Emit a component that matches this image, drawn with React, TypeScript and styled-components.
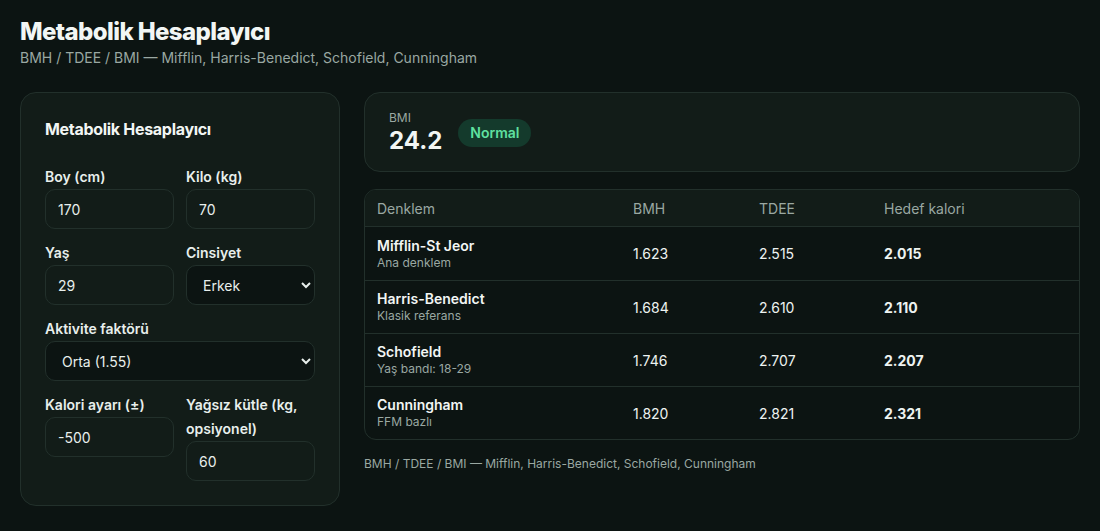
import styled, { createGlobalStyle } from "styled-components";

const GlobalStyle = createGlobalStyle`
  body {
    margin: 0;
    background: #0c1412;
    font-family: Inter, "Noto Sans", sans-serif;
    color: #e8efec;
  }
`;

const rows = [
  { name: "Mifflin-St Jeor", note: "Ana denklem", bmh: "1.623", tdee: "2.515", goal: "2.015" },
  { name: "Harris-Benedict", note: "Klasik referans", bmh: "1.684", tdee: "2.610", goal: "2.110" },
  { name: "Schofield", note: "Yaş bandı: 18-29", bmh: "1.746", tdee: "2.707", goal: "2.207" },
  { name: "Cunningham", note: "FFM bazlı", bmh: "1.820", tdee: "2.821", goal: "2.321" },
];

export default function App() {
  return (
    <>
      <GlobalStyle />
      <Page>
        <Header>
          <Title>Metabolik Hesaplayıcı</Title>
          <Subtitle>BMH / TDEE / BMI — Mifflin, Harris-Benedict, Schofield, Cunningham</Subtitle>
        </Header>

        <Layout>
          <FormCard>
            <CardTitle>Metabolik Hesaplayıcı</CardTitle>
            <FieldGrid>
              <Field>
                <Label>Boy (cm)</Label>
                <Input defaultValue="170" />
              </Field>
              <Field>
                <Label>Kilo (kg)</Label>
                <Input defaultValue="70" />
              </Field>
              <Field>
                <Label>Yaş</Label>
                <Input defaultValue="29" />
              </Field>
              <Field>
                <Label>Cinsiyet</Label>
                <Select defaultValue="m">
                  <option value="m">Erkek</option>
                  <option value="f">Kadın</option>
                </Select>
              </Field>
              <Field $wide>
                <Label>Aktivite faktörü</Label>
                <Select defaultValue="1.55">
                  <option value="1.2">Düşük (1.2)</option>
                  <option value="1.55">Orta (1.55)</option>
                  <option value="1.9">Yüksek (1.9)</option>
                </Select>
              </Field>
              <Field>
                <Label>Kalori ayarı (±)</Label>
                <Input defaultValue="-500" />
              </Field>
              <Field>
                <Label>Yağsız kütle (kg, opsiyonel)</Label>
                <Input defaultValue="60" />
              </Field>
            </FieldGrid>
          </FormCard>

          <Results>
            <BmiCard>
              <BmiBlock>
                <BmiLabel>BMI</BmiLabel>
                <BmiValue>24.2</BmiValue>
              </BmiBlock>
              <Badge>Normal</Badge>
            </BmiCard>

            <TableCard>
              <HeadRow>
                <HeadCell>Denklem</HeadCell>
                <HeadCell>BMH</HeadCell>
                <HeadCell>TDEE</HeadCell>
                <HeadCell>Hedef kalori</HeadCell>
              </HeadRow>
              {rows.map((r) => (
                <BodyRow key={r.name}>
                  <Cell>
                    <EqName>{r.name}</EqName>
                    <EqNote>{r.note}</EqNote>
                  </Cell>
                  <Cell>{r.bmh}</Cell>
                  <Cell>{r.tdee}</Cell>
                  <Cell $strong>{r.goal}</Cell>
                </BodyRow>
              ))}
            </TableCard>

            <Footnote>BMH / TDEE / BMI — Mifflin, Harris-Benedict, Schofield, Cunningham</Footnote>
          </Results>
        </Layout>
      </Page>
    </>
  );
}

const Page = styled.div`
  padding: 16px 20px 20px;
`;

const Header = styled.header`
  display: flex;
  flex-direction: column;
  margin-bottom: 24px;
`;

const Title = styled.h1`
  margin: 0;
  font-size: 24px;
  line-height: 32px;
  font-weight: 800;
  letter-spacing: -0.6px;
  color: #f2f6f4;
`;

const Subtitle = styled.p`
  margin: 0;
  font-size: 14px;
  line-height: 20px;
  color: #9aa8a2;
`;

const Layout = styled.div`
  display: grid;
  grid-template-columns: 320px 1fr;
  gap: 24px;
  align-items: start;
`;

const FormCard = styled.section`
  background: #121c18;
  border: 1px solid #22302b;
  border-radius: 16px;
  padding: 24px;
`;

const CardTitle = styled.h2`
  margin: 0 0 24px;
  font-size: 16px;
  line-height: 24px;
  font-weight: 700;
  letter-spacing: -0.3px;
  color: #f2f6f4;
`;

const FieldGrid = styled.div`
  display: grid;
  grid-template-columns: 1fr 1fr;
  column-gap: 12px;
  row-gap: 12px;
  align-items: start;
`;

const Field = styled.label<{ $wide?: boolean }>`
  display: flex;
  flex-direction: column;
  grid-column: ${(p) => (p.$wide ? "1 / -1" : "auto")};
`;

const Label = styled.span`
  font-size: 14px;
  line-height: 24px;
  font-weight: 600;
  color: #e8efec;
`;

const Input = styled.input`
  box-sizing: border-box;
  height: 40px;
  width: 100%;
  padding: 0 12px;
  background: #121c18;
  border: 1px solid #22302b;
  border-radius: 10px;
  color: #e8efec;
  font-family: Inter, "Noto Sans", sans-serif;
  font-size: 14px;
  outline: none;
`;

const Select = styled.select`
  box-sizing: border-box;
  height: 40px;
  width: 100%;
  padding: 0 8px 0 12px;
  background: #0c1412;
  border: 1px solid #22302b;
  border-radius: 10px;
  color: #e8efec;
  font-family: Inter, "Noto Sans", sans-serif;
  font-size: 14px;
  color-scheme: dark;
  outline: none;
`;

const Results = styled.div`
  display: flex;
  flex-direction: column;
`;

const BmiCard = styled.section`
  display: flex;
  align-items: center;
  gap: 16px;
  height: 80px;
  box-sizing: border-box;
  padding: 1px 24px 0;
  background: #121c18;
  border: 1px solid #22302b;
  border-radius: 16px;
  margin-bottom: 17px;
`;

const BmiBlock = styled.div`
  display: flex;
  flex-direction: column;
`;

const BmiLabel = styled.span`
  font-size: 12px;
  line-height: 16px;
  color: #9aa8a2;
`;

const BmiValue = styled.span`
  font-size: 24px;
  line-height: 30px;
  font-weight: 700;
  color: #f2f6f4;
`;

const Badge = styled.span`
  padding: 5px 12px;
  border-radius: 999px;
  background: #143a2c;
  color: #5fe0a0;
  font-size: 14px;
  line-height: 18px;
  font-weight: 600;
`;

const TableCard = styled.section`
  border: 1px solid #22302b;
  border-radius: 12px;
  overflow: hidden;
  background: #0c1412;
`;

const RowBase = styled.div`
  display: grid;
  grid-template-columns: 256px 126px 125px 1fr;
  align-items: center;
`;

const HeadRow = styled(RowBase)`
  height: 36px;
  background: #121c18;
  border-bottom: 1px solid #22302b;
`;

const HeadCell = styled.div`
  padding: 0 12px;
  font-size: 14px;
  color: #9aa8a2;
`;

const BodyRow = styled(RowBase)`
  height: 53px;
  box-sizing: border-box;
  & + & {
    border-top: 1px solid #22302b;
  }
`;

const Cell = styled.div<{ $strong?: boolean }>`
  padding: 0 12px;
  font-size: 14px;
  font-weight: ${(p) => (p.$strong ? 700 : 400)};
  color: #eef3f1;
`;

const EqName = styled.div`
  font-size: 14px;
  line-height: 18px;
  font-weight: 600;
  color: #f2f6f4;
`;

const EqNote = styled.div`
  font-size: 12px;
  line-height: 16px;
  color: #9aa8a2;
`;

const Footnote = styled.p`
  margin: 16px 0 0;
  font-size: 12px;
  line-height: 16px;
  color: #9aa8a2;
`;
